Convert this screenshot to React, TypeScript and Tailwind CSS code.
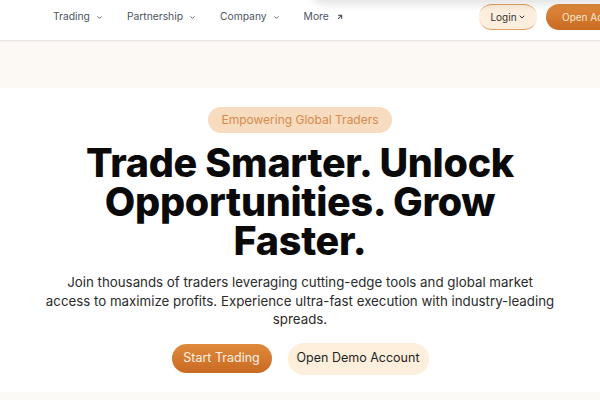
import React from "react";

const Chevron = ({ s = 8 }: { s?: number }) => (
  <svg width={s} height={s} viewBox="0 0 24 24" fill="none" stroke="currentColor" strokeWidth="3" strokeLinecap="round" strokeLinejoin="round">
    <path d="M6 9l6 6 6-6" />
  </svg>
);

const Arrow = () => (
  <svg width="8" height="8" viewBox="0 0 24 24" fill="none" stroke="currentColor" strokeWidth="3.4" strokeLinecap="round" strokeLinejoin="round">
    <path d="M7 17L17 7M8 7h9v9" />
  </svg>
);

export default function App() {
  return (
    <div className="relative w-[600px] h-[400px] overflow-hidden bg-white" style={{ fontFamily: "Inter, 'Noto Sans', sans-serif" }}>
      <div className="absolute right-[-20px] top-[-66px] w-[310px] h-[66px] rounded-2xl bg-white shadow-[0_4px_10px_rgba(0,0,0,0.12)] z-20" />
      <header className="relative z-10 h-[41px] pb-[6px] flex items-center bg-white border-b border-[#e6e6e6] shadow-[0_1px_2px_rgba(0,0,0,0.04)]">
        <nav className="flex items-center gap-[24px] pl-[53px] text-[10.3px] text-[#4b5563]">
          <span className="flex items-center gap-[6px]">Trading <Chevron s={7} /></span>
          <span className="flex items-center gap-[6px]">Partnership <Chevron s={7} /></span>
          <span className="flex items-center gap-[6px]">Company <Chevron s={7} /></span>
          <span className="flex items-center gap-[7px]">More <Arrow /></span>
        </nav>
        <div className="ml-auto flex items-center gap-[9px] mr-[-30px]">
          <button className="relative h-[26px] w-[58px] rounded-full bg-[#fdeedd] text-[10px] text-[#333] flex items-center justify-center gap-[1px] shadow-[inset_0_2px_0_-1px_#e0a060,inset_0_-2px_0_-1px_#e0a060]">
            Login <Chevron />
          </button>
          <button className="h-[26px] w-[84px] rounded-full bg-gradient-to-b from-[#e08a3c] to-[#c96a22] text-[10px] text-[#fde7d0] text-left pl-[16px] whitespace-nowrap">
            Open Account
          </button>
        </div>
      </header>
      <div className="h-[47px] bg-[#fcf9f5]" />
      <main className="flex flex-col items-center pt-[19px]">
        <div className="h-[26px] px-[13px] rounded-full bg-[#f7dcc0] text-[12px] text-[#d88b4c] flex items-center">
          Empowering Global Traders
        </div>
        <h1 className="mt-[11px] text-center text-[39.5px] leading-[39px] font-extrabold tracking-[-0.3px] text-[#0a0a0a] w-[460px]">
          Trade Smarter. Unlock Opportunities. Grow Faster.
        </h1>
        <p className="mt-[12px] text-center text-[13.3px] leading-[18.5px] text-[#2b2b2b] w-[510px]">
          Join thousands of traders leveraging cutting-edge tools and global market access to maximize profits. Experience ultra-fast execution with industry-leading spreads.
        </p>
        <div className="mt-[14px] flex items-center gap-[16px]">
          <button className="h-[29px] w-[100px] rounded-full bg-gradient-to-b from-[#e08a3c] to-[#c96a22] text-[12.5px] text-[#fff3e6]">
            Start Trading
          </button>
          <button className="h-[32px] w-[141px] rounded-full bg-[#fdefdc] text-[12.5px] text-[#1f1f1f]">
            Open Demo Account
          </button>
        </div>
      </main>
      <div className="absolute left-0 right-0 bottom-0 h-[8px] bg-[#fcfaf7]" />
    </div>
  );
}
